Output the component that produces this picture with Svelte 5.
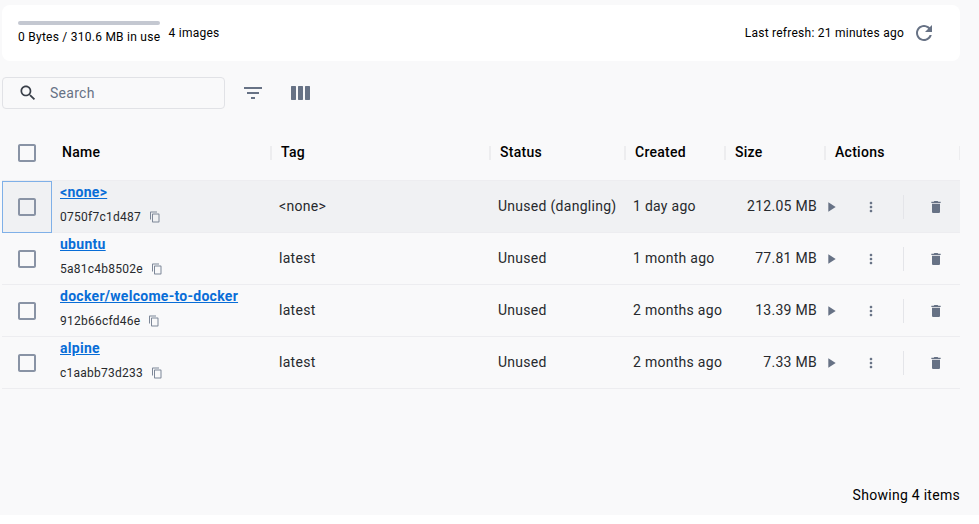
<script>
  const icons = {
    search: 'M15.5 14h-.79l-.28-.27C15.41 12.59 16 11.11 16 9.5 16 5.91 13.09 3 9.5 3S3 5.91 3 9.5 5.91 16 9.5 16c1.61 0 3.09-.59 4.23-1.57l.27.28v.79l5 4.99L20.49 19l-4.99-5zm-6 0C7.01 14 5 11.99 5 9.5S7.01 5 9.5 5 14 7.01 14 9.5 11.99 14 9.5 14z',
    filter: 'M10 18h4v-2h-4v2zM3 6v2h18V6H3zm3 7h12v-2H6v2z',
    columns: 'M3.500 5h4l.5.5v13l-.5.5h-4l-.5-.5v-13zM10.500 5h4l.5.5v13l-.5.5h-4l-.5-.5v-13zM17.500 5h4l.5.5v13l-.5.5h-4l-.5-.5v-13z',
    refresh: 'M17.65 6.35C16.2 4.9 14.21 4 12 4c-4.42 0-7.99 3.58-7.99 8s3.57 8 7.99 8c3.73 0 6.84-2.55 7.73-6h-2.08c-.82 2.33-3.04 4-5.65 4-3.31 0-6-2.69-6-6s2.69-6 6-6c1.66 0 3.14.69 4.22 1.78L13 11h7V4l-2.35 2.35z',
    box: 'M19 5v14H5V5h14m0-2H5c-1.1 0-2 .9-2 2v14c0 1.1.9 2 2 2h14c1.1 0 2-.9 2-2V5c0-1.1-.9-2-2-2z',
    copy: 'M16 1H4c-1.1 0-2 .9-2 2v14h2V3h12V1zm3 4H8c-1.1 0-2 .9-2 2v14c0 1.1.9 2 2 2h11c1.1 0 2-.9 2-2V7c0-1.1-.9-2-2-2zm0 16H8V7h11v14z',
    play: 'M8 5v14l11-7z',
    more: 'M12 8c1.1 0 2-.9 2-2s-.9-2-2-2-2 .9-2 2 .9 2 2 2zm0 2c-1.1 0-2 .9-2 2s.9 2 2 2 2-.9 2-2-.9-2-2-2zm0 6c-1.1 0-2 .9-2 2s.9 2 2 2 2-.9 2-2-.9-2-2-2z',
    trash: 'M6 19c0 1.1.9 2 2 2h8c1.1 0 2-.9 2-2V7H6v12zM19 4h-3.5l-1-1h-5l-1 1H5v2h14V4z'
  };
  const headers = ['Name', 'Tag', 'Status', 'Created', 'Size', 'Actions'];
  const rows = [
    { name: '<none>', id: '0750f7c1d487', tag: '<none>', status: 'Unused (dangling)', created: '1 day ago', size: '212.05 MB' },
    { name: 'ubuntu', id: '5a81c4b8502e', tag: 'latest', status: 'Unused', created: '1 month ago', size: '77.81 MB' },
    { name: 'docker/welcome-to-docker', id: '912b66cfd46e', tag: 'latest', status: 'Unused', created: '2 months ago', size: '13.39 MB' },
    { name: 'alpine', id: 'c1aabb73d233', tag: 'latest', status: 'Unused', created: '2 months ago', size: '7.33 MB' }
  ];
</script>

{#snippet icon(name, size)}
  <svg class={name} width={size} height={size} viewBox="0 0 24 24" aria-hidden="true"><path d={icons[name]} /></svg>
{/snippet}

<main>
  <section class="summary">
    <div class="usage">
      <div class="bar"></div>
      <span>0 Bytes / 310.6 MB in use</span>
    </div>
    <span class="count">4 images</span>
    <span class="last">Last refresh: 21 minutes ago</span>
    {@render icon('refresh', 24)}
  </section>

  <div class="toolbar">
    <div class="field">
      {@render icon('search', 20)}
      <span>Search</span>
    </div>
    {@render icon('filter', 24)}
    {@render icon('columns', 24)}
  </div>

  <div class="table">
    <div class="row head">
      <div class="check">{@render icon('box', 24)}</div>
      {#each headers as h}
        <div class="th"><span>{h}</span></div>
      {/each}
    </div>
    {#each rows as r, i}
      <div class="row" class:active={i === 0}>
        <div class="check">{@render icon('box', 24)}</div>
        <div class="name">
          <a href="#top">{r.name}</a>
          <div class="id"><span>{r.id}</span>{@render icon('copy', 12)}</div>
        </div>
        <div class="td">{r.tag}</div>
        <div class="td">{r.status}</div>
        <div class="td">{r.created}</div>
        <div class="td size">{r.size}</div>
        <div class="actions">
          {@render icon('play', 16)}
          {@render icon('more', 16)}
          <i></i>
          {@render icon('trash', 16)}
        </div>
      </div>
    {/each}
  </div>

  <footer>Showing 4 items</footer>
</main>

<style>
  :global(body) { background: #fff; }
  main {
    box-sizing: border-box;
    width: 979px;
    height: 515px;
    padding: 5px 19px 0 2px;
    background: #f9f9fa;
    font-family: Roboto, 'Liberation Sans', sans-serif;
    font-size: 14px;
    letter-spacing: 0.28px;
    color: #000;
    display: flex;
    flex-direction: column;
    white-space: nowrap;
  }
  svg { display: block; flex: none; fill: #677285; }
  .summary {
    height: 56px;
    flex: none;
    box-sizing: border-box;
    background: #fff;
    border-radius: 8px;
    display: flex;
    align-items: center;
    padding: 0 24px 0 16px;
    font-size: 12px;
    line-height: 18px;
    letter-spacing: 0.25px;
  }
  .usage { width: 142px; }
  .bar { height: 4px; border-radius: 2px; background: #c4c8d1; margin-bottom: 3px; }
  .usage span { display: block; margin-bottom: -1px; }
  .count { margin-left: 8.5px; }
  .last { margin-left: auto; margin-right: 8px; }
  .toolbar { display: flex; align-items: center; margin-top: 16px; height: 32px; flex: none; }
  .field {
    box-sizing: border-box;
    width: 223px;
    height: 32px;
    border: 1px solid #e1e2e6;
    border-radius: 4px;
    display: flex;
    align-items: center;
    padding-left: 15px;
    color: #677285;
  }
  .field span { margin-left: 12px; }
  .search { fill: #393f49; }
  .filter { margin-left: 16px; }
  .columns { margin-left: 23px; }
  .table { margin-top: 16px; }
  .row {
    display: grid;
    grid-template-columns: 50px 219px 219px 135px 100px 100px 135px;
    height: 52px;
    box-sizing: border-box;
    border-bottom: 1px solid #ededf0;
    color: #27292d;
  }
  .head { height: 56px; color: #000; font-weight: 500; }
  .check { display: flex; align-items: center; justify-content: center; box-sizing: border-box; margin-bottom: -1px; }
  .box { fill: #8993a5; }
  .active { background: #f0f1f3; }
  .active .check { border: 1px solid #7fb0e8; }
  .th { display: flex; align-items: center; justify-content: space-between; padding-left: 10px; }
  .th span { margin-top: -2px; }
  .th::after { content: ''; width: 2px; height: 14px; background: #ededef; margin-right: -1px; }
  .th:last-child::after { width: 1px; margin-right: 0; }
  .name { padding: 1px 0 0 8px; }
  a { display: block; width: max-content; color: #086dd7; font-weight: 700; line-height: 20px; text-decoration: underline; }
  .id { display: flex; align-items: center; font-size: 12px; line-height: 18px; letter-spacing: 0.25px; margin-top: 6px; }
  .copy { margin-left: 8px; fill: #7d8798; }
  .td { padding-left: 8px; line-height: 50px; }
  .size { text-align: right; padding: 0 8px 0 0; }
  .actions { display: flex; align-items: center; padding-top: 1px; margin-left: -2px; }
  .more { margin-left: 24px; }
  .actions i { width: 1px; height: 24px; background: #e4e5e9; margin: 0 24px; }
  footer { margin-top: auto; text-align: right; line-height: 20px; padding-bottom: 10px; }
</style>
